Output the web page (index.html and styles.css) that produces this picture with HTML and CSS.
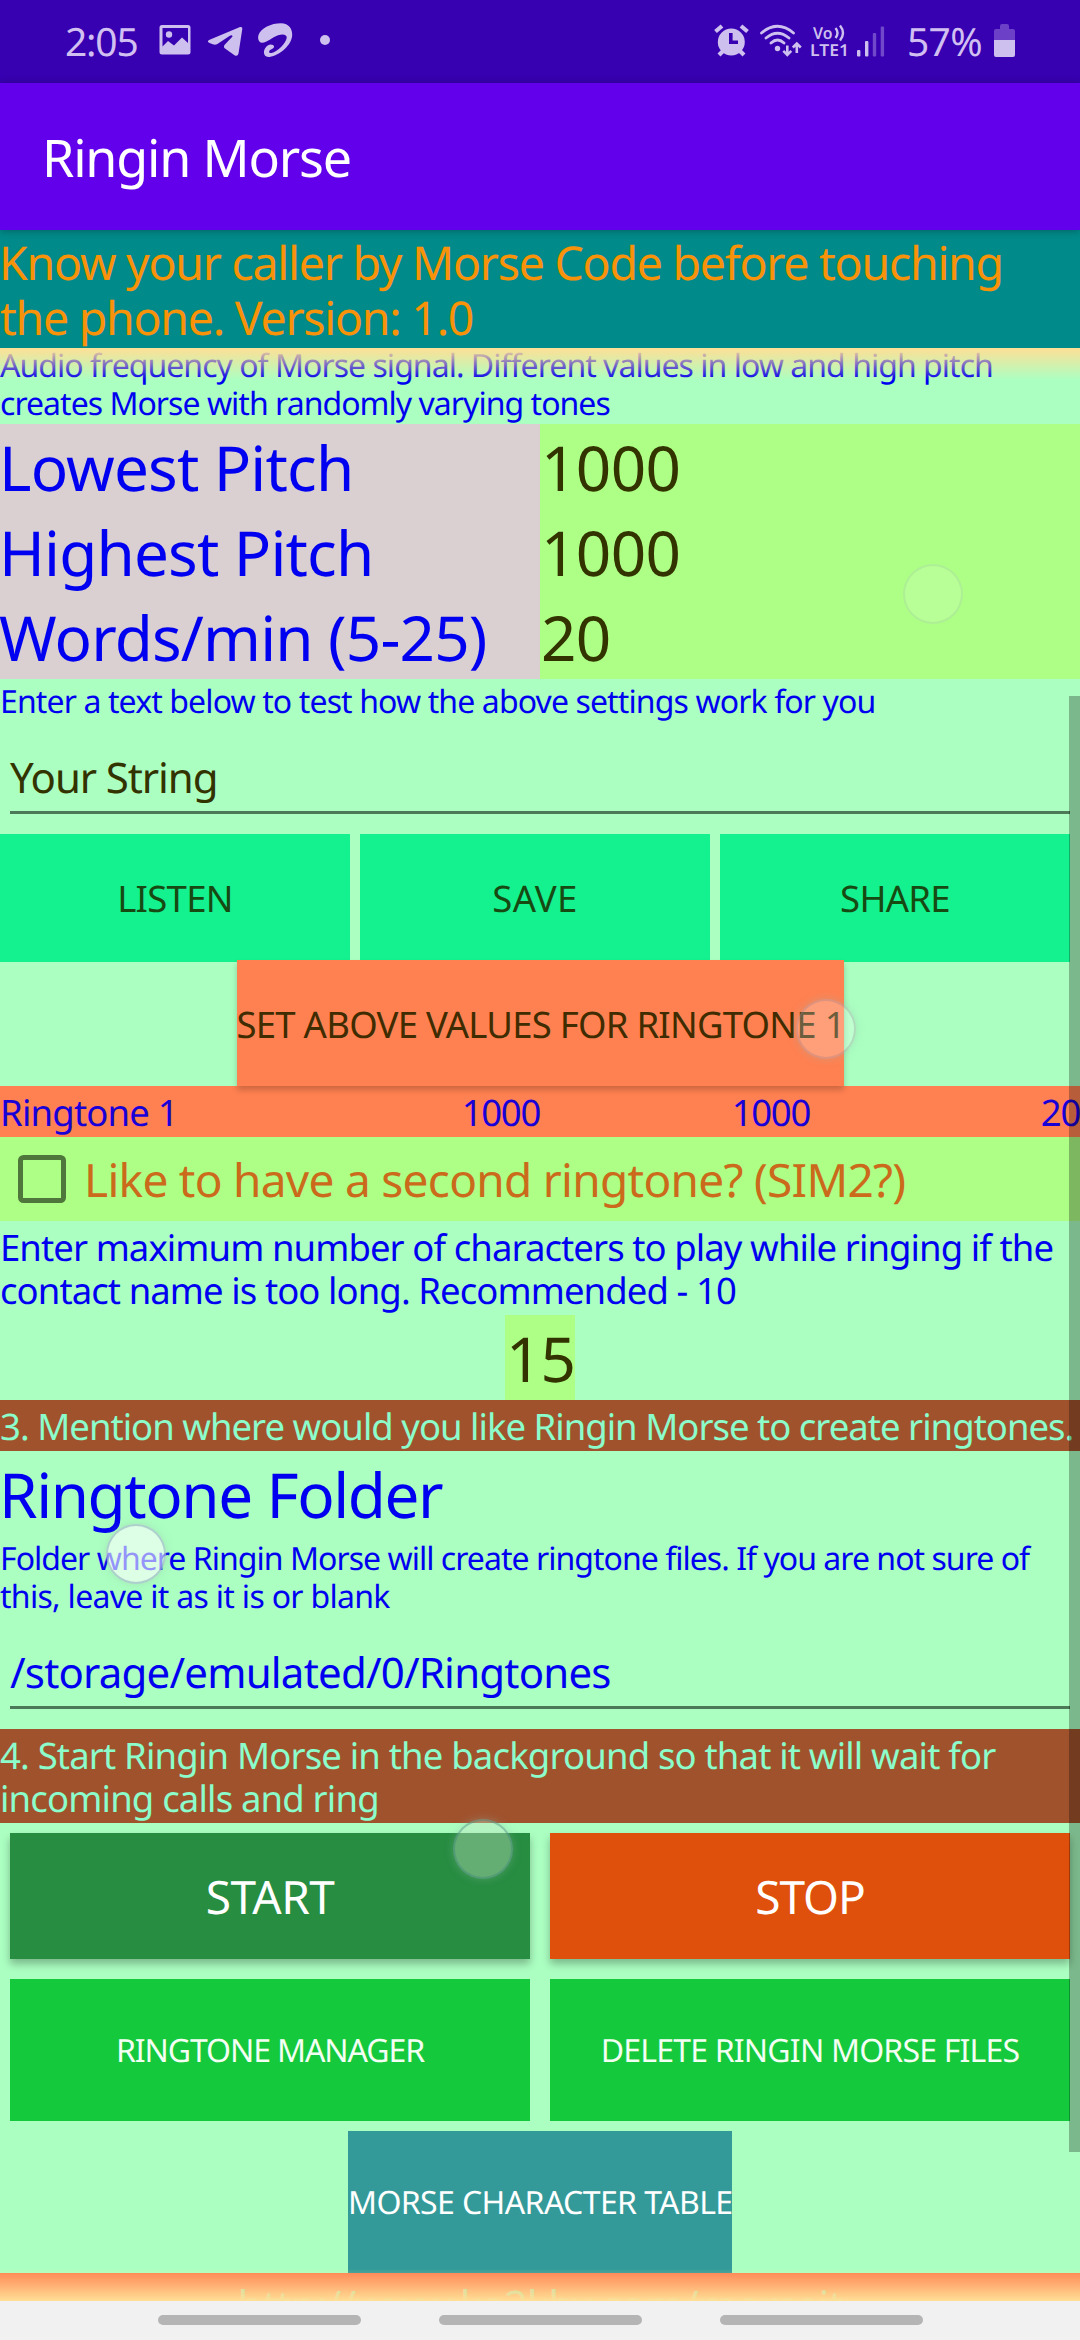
FILE: index.html
```html
<!DOCTYPE html>
<html lang="en">
<head>
<meta charset="utf-8">
<title>Ringin Morse</title>
<link rel="stylesheet" href="styles.css">
</head>
<body>
<div class="screen">
  <div class="status">
    <span class="clock">2:05</span>
    <svg class="notifications" width="180" height="50" viewBox="155 15 180 50" fill="#cdbfee">
      <path fill-rule="evenodd" d="M162 25H188Q190.500 25 190.500 27.500V52Q190.500 54.500 188 54.500H162Q159.500 54.500 159.500 52V27.500Q159.500 25 162 25ZM162.500 28V46.500L168 41L174 45.500L182 37.500L188 43V28Z"/>
      <circle cx="169" cy="34.500" r="3.200"/>
      <path d="M209 40L240 27Q242.700 26.400 242.300 29L238.500 53.500Q237.600 57 234.500 55.300L225 48.500Q223 46.700 224.700 44.700L232.500 36.500Q232.300 34.500 229.500 36L217 44.300Q215 45 212.700 44.300L209 42.700Q206.800 41.400 209 40Z"/>
      <path fill-rule="evenodd" d="M258.500 35C261 28 271 23.200 281 23.200C289 23.300 292.600 29 292.200 35.500C291.500 45 280 55.500 269.500 57C264.500 57.500 262.500 53 265 48.500C267 45 270.500 43.500 273 45C275 46.500 274 48.500 271 49.500C268.500 50.500 268.500 53.500 271.500 53C278 51.500 285.500 43.500 286.700 38C287.300 34.500 283 33.600 278 35.200C272 37.200 267.500 42.500 262 42.700C258.500 42.500 257.500 38.500 258.500 35Z"/>
      <circle cx="325" cy="40" r="5"/>
    </svg>
    <svg class="signals" width="176" height="50" viewBox="711 15 176 50" fill="#cdbfee" stroke="none">
      <circle cx="731.300" cy="42" r="13.500"/>
      <g stroke="#cdbfee" stroke-width="4.200"><path d="M715.500 31.500L722 26M741 26L747.500 31.500"/><path d="M719 55L724 50M744 55L739 50"/></g>
      <path d="M730.800 33V42.300H738" stroke="#3700b1" stroke-width="3.600" fill="none"/>
      <g fill="none" stroke="#cdbfee" stroke-width="2.800" stroke-linecap="round"><path d="M761.500 33Q777.500 19.500 793.500 33M766 38Q777.500 28.500 789 38M771 43Q777.500 37 784 43"/></g>
      <circle cx="777.500" cy="48.500" r="2.700"/>
      <g fill="none" stroke="#cdbfee" stroke-width="2.600"><path d="M787.300 45.500V54.500M783.300 50.800L787.300 54.800L791.300 50.800M796.800 53V44M792.800 47.500L796.800 43.500L800.800 47.500"/></g>
      <text class="net" x="813" y="38.500" textLength="19.500" lengthAdjust="spacingAndGlyphs">Vo</text>
      <path d="M835.500 28Q839.500 33 835.500 38M840 25.500Q846 33 840 40.500" fill="none" stroke="#cdbfee" stroke-width="2.400"/>
      <text class="net" x="810" y="55.800" textLength="39" lengthAdjust="spacingAndGlyphs">LTE1</text>
      <rect x="857" y="50" width="3.400" height="6.500" rx="1"/><rect x="865" y="41" width="3.400" height="15.500" rx="1"/>
      <g fill="#7049ca"><rect x="872.800" y="33" width="3.400" height="23.500" rx="1"/><rect x="880.700" y="26.500" width="3.400" height="30" rx="1"/></g>
    </svg>
    <span class="percent">57%</span>
    <svg class="battery" width="22" height="50" viewBox="994 15 22 50">
      <path d="M1000 29V26Q1000 24 1002 24H1007Q1009 24 1009 26V29H1013Q1015 29 1015 31V40H994V31Q994 29 996 29Z" fill="#6c40c7"/>
      <path d="M994 40H1015V55Q1015 57 1013 57H996Q994 57 994 55Z" fill="#cdbfee"/>
    </svg>
  </div>
  <header class="appbar">Ringin Morse</header>
  <div class="intro">Know your caller by Morse Code before touching<br>the phone. Version: 1.0</div>
  <main class="scroller">
    <p class="note first">Audio frequency of Morse signal. Different values in low and high pitch<br>creates Morse with randomly varying tones</p>
    <div class="settings">
      <div class="name">Lowest Pitch</div><div class="value">1000</div>
      <div class="name">Highest Pitch</div><div class="value">1000</div>
      <div class="name">Words/min (5-25)</div><div class="value">20</div>
    </div>
    <p class="note prompt">Enter a text below to test how the above settings work for you</p>
    <div class="field sample">Your String</div>
    <div class="actions"><div class="action listen">LISTEN</div><div class="action save">SAVE</div><div class="action share">SHARE</div></div>
    <div class="apply"><span>SET ABOVE VALUES FOR RINGTONE 1</span></div>
    <div class="tone"><span class="tone-name">Ringtone 1</span><span>1000</span><span>1000</span><span>20</span></div>
    <div class="second">
      <svg width="50" height="50" viewBox="0 0 50 50"><rect x="3.500" y="3.500" width="43" height="43" rx="3" fill="none" stroke="#4f773b" stroke-width="5"/></svg>
      <span>Like to have a second ringtone? (SIM2?)</span>
    </div>
    <p class="para">Enter maximum number of characters to play while ringing if the<br>contact name is too long. Recommended - 10</p>
    <div class="limit">15</div>
    <h2 class="step">3. Mention where would you like Ringin Morse to create ringtones.</h2>
    <h3 class="folder">Ringtone Folder</h3>
    <p class="note">Folder where Ringin Morse will create ringtone files. If you are not sure of<br><span class="tail">this, leave it as it is or blank</span></p>
    <div class="field path">/storage/emulated/0/Ringtones</div>
    <h2 class="step four">4. Start Ringin Morse in the background so that it will wait for<br>incoming calls and ring</h2>
    <div class="controls">
      <div class="control start">START</div><div class="control stop">STOP</div>
      <div class="tool manager">RINGTONE MANAGER</div><div class="tool delete">DELETE RINGIN MORSE FILES</div>
    </div>
    <div class="table-button"><span>MORSE CHARACTER TABLE</span></div>
    <div class="link">http://www.ke2kby.com/morseit</div>
    <div class="fade top"></div>
    <div class="fade bottom"></div>
    <div class="scrollbar"></div>
  </main>
  <nav class="nav"><i></i><i></i><i></i></nav>
  <div class="touch t1"></div><div class="touch t2"></div><div class="touch t3"></div><div class="touch t4"></div>
</div>
</body>
</html>
```
FILE: styles.css
```css
* { box-sizing: border-box; }
body { margin: 0; }
p, h2, h3 { margin: 0; font-weight: 400; }
.screen {
  position: relative;
  width: 1080px;
  height: 2340px;
  overflow: hidden;
  display: flex;
  flex-direction: column;
  background: #abffc1;
  font-family: "Noto Sans", sans-serif;
  text-rendering: geometricPrecision;
  white-space: nowrap;
  color: #0000f0;
}
.status {
  height: 83px;
  flex: none;
  display: flex;
  align-items: flex-start;
  padding: 15px 64px 0 65px;
  background: #3700b1;
  color: #d0bff0;
  font-size: 39px;
  line-height: 53px;
}
.clock { width: 90px; letter-spacing: -1.2px; }
.signals { margin-left: 376px; }
.percent { width: 107px; padding-left: 20px; letter-spacing: -.7px; }
.net { font: 600 16.500px "Noto Sans", sans-serif; }
.appbar {
  position: relative;
  z-index: 2;
  flex: none;
  height: 147px;
  padding-left: 42px;
  background: #6200eb;
  color: #fff;
  font-size: 52px;
  line-height: 149px;
  letter-spacing: -1.2px;
  box-shadow: 0 1px 8px rgba(0,0,0,.28);
}
.intro {
  flex: none;
  height: 118px;
  padding: 5px 0 0;
  background: #008b8a;
  color: #f79209;
  font-size: 46.500px;
  line-height: 55px;
  letter-spacing: -1.28px;
  text-indent: -1px;
}
.scroller { position: relative; height: 1953px; flex: none; overflow: hidden; }
.note { padding: 4px 0 0; font-size: 32px; line-height: 38px; letter-spacing: -.97px; }
.note.first { height: 76px; margin-top: -1px; padding: 0; margin-bottom: 1px; }
.prompt { letter-spacing: -.88px; }
.tail { letter-spacing: -.7px; }
.settings {
  display: grid;
  grid-template-columns: 540px 540px;
  grid-auto-rows: 85px;
  font-size: 62px;
  line-height: 88px;
}
.name { background: #dacfd1; letter-spacing: -.85px; text-indent: -1px; }
.value { background: #adff85; color: #333300; letter-spacing: -.6px; text-indent: 1px; }
.field {
  margin: 0 10px;
  border-bottom: 3px solid #4c7957;
  font-size: 42px;
  line-height: 57px;
}
.sample { height: 93px; margin-bottom: 20px; padding-top: 28px; color: #333300; letter-spacing: -1.1px; }
.actions { display: grid; grid-template-columns: repeat(3, 1fr); gap: 10px; height: 126px; padding-right: 10px; }
.action { background: #13f28e; text-align: center; font-size: 36.500px; line-height: 128px; color: #174a12; letter-spacing: -.7px; }
.save { letter-spacing: .3px; }
.apply { display: flex; justify-content: center; height: 126px; }
.apply span {
  position: relative;
  z-index: 1;
  width: 607px;
  text-align: center;
  background: #ff8151;
  color: #3f2c00;
  font-size: 36.500px;
  line-height: 128px;
  letter-spacing: -.75px;
  box-shadow: 0 4px 6px rgba(0,0,0,.2);
}
.tone {
  display: grid;
  grid-template-columns: 250px 290px 270px 270px;
  height: 51px;
  padding-top: 5px;
  background: #ff8151;
  color: #1800d6;
  font-size: 36.500px;
  line-height: 43px;
  letter-spacing: -1.3px;
  text-align: right;
}
.tone-name { text-align: left; letter-spacing: -.8px; }
.second {
  display: flex;
  align-items: flex-start;
  gap: 17px;
  height: 84px;
  padding: 17px 0 0 17px;
  background: #adff85;
  color: #cb6a1b;
  font-size: 46px;
  line-height: 53px;
  letter-spacing: -.72px;
}
.para { padding-top: 5px; height: 94px; font-size: 36.500px; line-height: 43px; letter-spacing: -.92px; }
.limit { width: 70px; height: 85px; margin: 0 auto; background: #adff85; color: #333300; font-size: 62px; line-height: 88px; letter-spacing: -1px; text-align: center; text-indent: 1px; }
.step {
  padding: 5px 0 3px;
  background: #a0522d;
  color: #8bfcca;
  font-size: 36.500px;
  line-height: 43px;
  letter-spacing: -.99px;
}
.four { letter-spacing: -.83px; }
.folder { height: 85px; font-size: 62px; line-height: 88px; letter-spacing: -1.43px; text-indent: -1px; }
.path { height: 93px; margin-bottom: 20px; padding-top: 28px; letter-spacing: -.8px; }
.controls { display: grid; grid-template-columns: 520px 520px; grid-template-rows: 126px 142px; gap: 20px; padding: 10px 10px 0; text-align: center; color: #fff; }
.control { font-size: 46px; line-height: 128px; letter-spacing: -.5px; box-shadow: 0 5px 8px rgba(0,0,0,.28); }
.start { background: #278d41; }
.stop { background: #de500b; letter-spacing: -1px; }
.tool { font-size: 32px; line-height: 143px; background: #15c93d; letter-spacing: -1.1px; color: #f2fff2; }
.delete { letter-spacing: -.8px; }
.table-button { display: flex; justify-content: center; padding-top: 10px; }
.table-button span { width: 384px; height: 142px; background: #349a99; color: #fff; text-align: center; font-size: 32px; line-height: 143px; letter-spacing: -.6px; }
.link { height: 80px; padding-top: 4px; background: #ff7f50; color: rgba(127,255,212,.75); font-size: 42px; line-height: 57px; letter-spacing: -1px; text-align: center; }
.fade { position: absolute; left: 0; right: 0; height: 32px; }
.fade.top { top: 0; background: linear-gradient(#ffdf96, rgba(255,223,150,0)); }
.fade.bottom { bottom: 0; background: linear-gradient(rgba(255,223,150,0), #ffdf96); }
.scrollbar { position: absolute; right: 0; top: 348px; width: 11px; height: 1456px; background: rgba(0,0,0,.28); }
.nav { flex: none; height: 39px; display: flex; justify-content: center; gap: 78px; padding-top: 14px; background: #f1f1f1; }
.nav i { width: 203px; height: 10px; border-radius: 5px; background: #b5b5b5; }
.touch {
  position: absolute;
  z-index: 3;
  width: 60px;
  height: 60px;
  border-radius: 50%;
  border: 2px solid rgba(90,120,160,.35);
  background: rgba(255,255,255,.2);
  box-shadow: 0 0 8px rgba(150,180,170,.35);
}
.t1 { left: 903px; top: 564px; background: rgba(255,255,255,.15); border-color: rgba(90,120,130,.12); box-shadow: none; }
.t2 { left: 796px; top: 999px; background: rgba(255,255,255,.24); border-color: rgba(130,110,130,.25); }
.t3 { left: 106px; top: 1524px; background: rgba(255,255,255,.58); }
.t4 { left: 453px; top: 1819px; background: rgba(200,230,200,.38); border-color: rgba(60,130,120,.4); }
```
